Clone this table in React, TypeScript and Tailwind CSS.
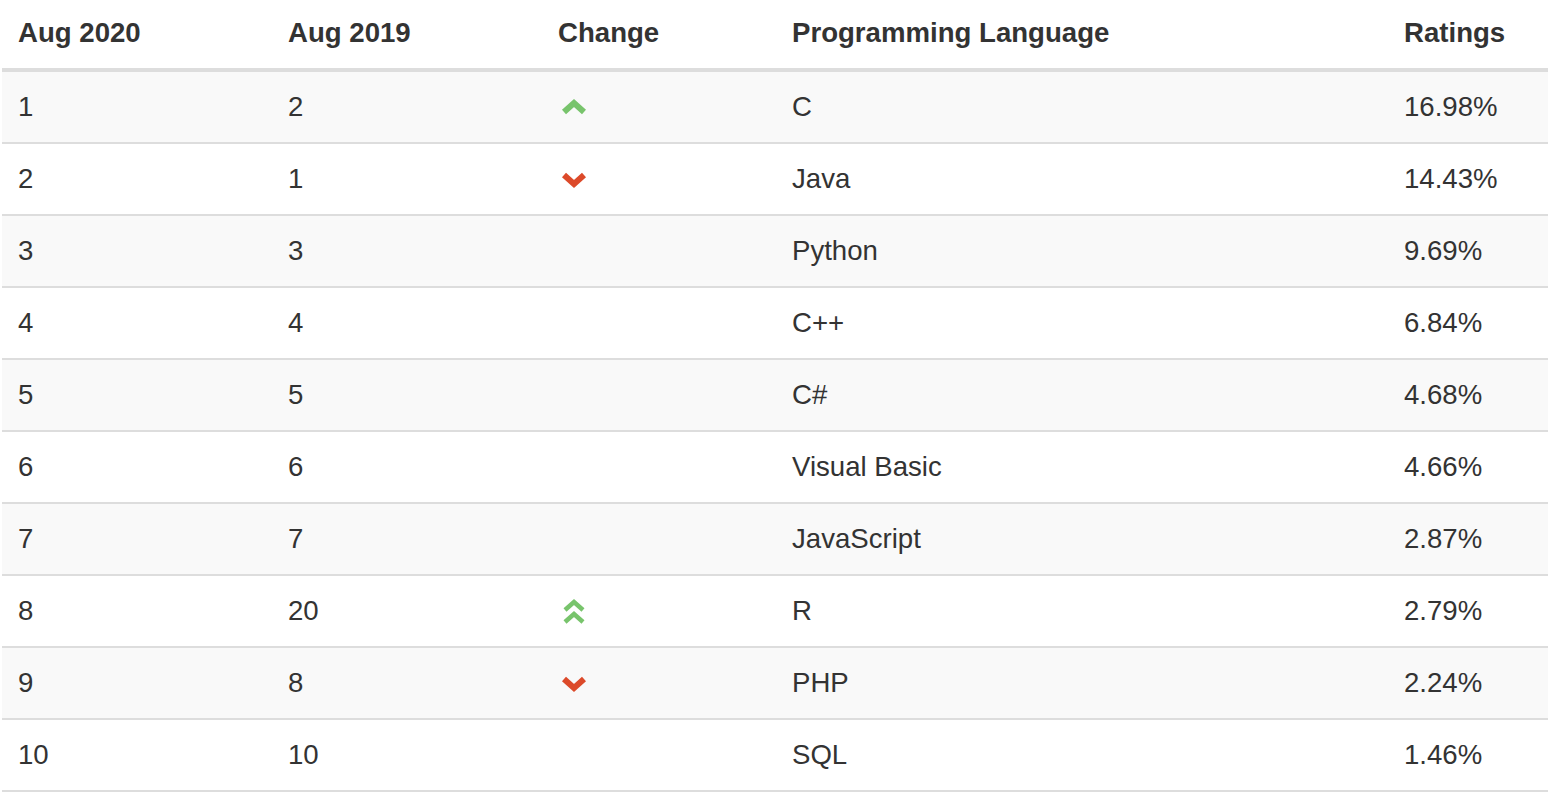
type Change = 'up' | 'down' | 'upup' | null;

interface Row {
  now: number;
  prev: number;
  change: Change;
  language: string;
  rating: string;
}

const rows: Row[] = [
  { now: 1, prev: 2, change: 'up', language: 'C', rating: '16.98%' },
  { now: 2, prev: 1, change: 'down', language: 'Java', rating: '14.43%' },
  { now: 3, prev: 3, change: null, language: 'Python', rating: '9.69%' },
  { now: 4, prev: 4, change: null, language: 'C++', rating: '6.84%' },
  { now: 5, prev: 5, change: null, language: 'C#', rating: '4.68%' },
  { now: 6, prev: 6, change: null, language: 'Visual Basic', rating: '4.66%' },
  { now: 7, prev: 7, change: null, language: 'JavaScript', rating: '2.87%' },
  { now: 8, prev: 20, change: 'upup', language: 'R', rating: '2.79%' },
  { now: 9, prev: 8, change: 'down', language: 'PHP', rating: '2.24%' },
  { now: 10, prev: 10, change: null, language: 'SQL', rating: '1.46%' },
];

function ChangeIcon({ change }: { change: Change }) {
  if (change === 'up') {
    return (
      <svg width="26" height="18" viewBox="0 0 26 18" className="ml-[3px]">
        <polyline points="3,14 13,5 23,14" fill="none" stroke="#78c46c" strokeWidth="6" strokeLinejoin="miter" />
      </svg>
    );
  }
  if (change === 'down') {
    return (
      <svg width="26" height="18" viewBox="0 0 26 18" className="ml-[3px] mt-[2px]">
        <polyline points="3,4 13,13 23,4" fill="none" stroke="#dc4a2a" strokeWidth="6" strokeLinejoin="miter" />
      </svg>
    );
  }
  if (change === 'upup') {
    return (
      <svg width="26" height="30" viewBox="0 0 26 30" className="ml-[3px] mt-[2px]">
        <polyline points="4,13 13,5 22,13" fill="none" stroke="#78c46c" strokeWidth="4.5" strokeLinejoin="miter" />
        <polyline points="4,25 13,17 22,25" fill="none" stroke="#78c46c" strokeWidth="4.5" strokeLinejoin="miter" />
      </svg>
    );
  }
  return null;
}

const cols = 'grid grid-cols-[270px_270px_234px_612px_1fr]';

export default function App() {
  return (
    <div className="min-h-screen bg-white pl-[2px] text-[#333] font-['Liberation_Sans',Arial,sans-serif] text-[27.6px]">
      {/* Header */}
      <div className={`${cols} h-[72px] border-b-4 border-[#ddd] font-bold`}>
        {['Aug 2020', 'Aug 2019', 'Change', 'Programming Language', 'Ratings'].map((h) => (
          <div key={h} className="flex items-center pl-4 pb-[2px]">
            {h}
          </div>
        ))}
      </div>

      {/* Body rows */}
      {rows.map((r, i) => (
        <div
          key={r.now}
          className={`${cols} h-[72px] border-b-2 border-[#ddd] ${i % 2 === 0 ? 'bg-[#f9f9f9]' : 'bg-white'}`}
        >
          <div className="flex items-center pl-4">{r.now}</div>
          <div className="flex items-center pl-4">{r.prev}</div>
          <div className="flex items-center pl-4">
            <ChangeIcon change={r.change} />
          </div>
          <div className="flex items-center pl-4">{r.language}</div>
          <div className="flex items-center pl-4">{r.rating}</div>
        </div>
      ))}
    </div>
  );
}
